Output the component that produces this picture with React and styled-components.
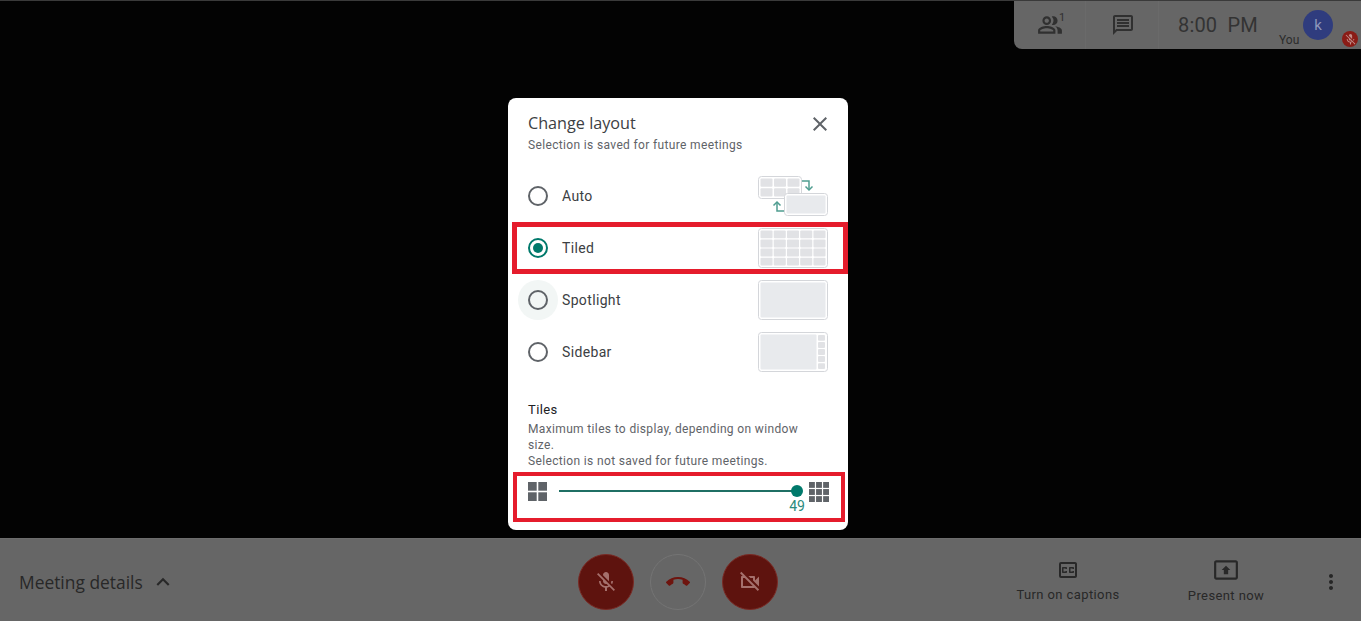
import React from 'react';
import styled, { createGlobalStyle } from 'styled-components';
import {
	MdClose,
	MdOutlinePeopleAlt,
	MdOutlineMessage,
	MdMicOff,
	MdCallEnd,
	MdOutlineVideocamOff,
	MdOutlineClosedCaption,
	MdOutlinePresentToAll,
	MdMoreVert,
	MdKeyboardArrowUp,
} from 'react-icons/md';

const TEAL = '#00796b';

function cells(cols, rows, x, y, w, h, gap) {
	const out = [];
	const cw = (w - gap * (cols - 1)) / cols;
	const ch = (h - gap * (rows - 1)) / rows;
	for (let r = 0; r < rows; r++) {
		for (let c = 0; c < cols; c++) {
			out.push(<rect key={`${r}-${c}`} x={x + c * (cw + gap)} y={y + r * (ch + gap)} width={cw} height={ch} rx="1" fill="#e1e2e5" />);
		}
	}
	return out;
}

function Frame() {
	return <rect x="0.5" y="0.5" width="69" height="39" rx="3" fill="#fff" stroke="#d4d6da" />;
}

function AutoThumb() {
	return (
		<svg width="70" height="40" viewBox="0 0 70 40">
			<rect x="0.5" y="0.5" width="43" height="22" rx="3" fill="#fff" stroke="#d4d6da" />
			{cells(3, 2, 2.5, 2.5, 39, 18, 1.5)}
			<path d="M44 5h7v9" fill="none" stroke="#4f9d90" strokeWidth="1.5" />
			<path d="M47.5 10.5L51 14l3.5-3.5" fill="none" stroke="#4f9d90" strokeWidth="1.5" />
			<path d="M27 35h-8v-9" fill="none" stroke="#4f9d90" strokeWidth="1.5" />
			<path d="M15.5 29.5L19 26l3.5 3.5" fill="none" stroke="#4f9d90" strokeWidth="1.5" />
			<rect x="26.5" y="17.5" width="43" height="22" rx="3" fill="#fff" stroke="#d4d6da" />
			<rect x="28.5" y="19.5" width="39" height="18" rx="1" fill="#e8eaed" />
		</svg>
	);
}

function TiledThumb() {
	return (
		<svg width="70" height="40" viewBox="0 0 70 40">
			<Frame />
			{cells(5, 4, 2.5, 2.5, 65, 35, 1.2)}
		</svg>
	);
}

function SpotlightThumb() {
	return (
		<svg width="70" height="40" viewBox="0 0 70 40">
			<Frame />
			<rect x="2.5" y="2.5" width="65" height="35" rx="1" fill="#e8eaed" />
		</svg>
	);
}

function SidebarThumb() {
	return (
		<svg width="70" height="40" viewBox="0 0 70 40">
			<Frame />
			<rect x="2.5" y="2.5" width="56" height="35" rx="1" fill="#e8eaed" />
			{cells(1, 5, 60, 3, 7, 34, 1.2)}
		</svg>
	);
}

function GridIcon({ n, size }) {
	const gap = n === 2 ? 1.6 : 1.2;
	const cw = (size - gap * (n - 1)) / n;
	const out = [];
	for (let r = 0; r < n; r++) {
		for (let c = 0; c < n; c++) {
			out.push(<rect key={`${r}-${c}`} x={c * (cw + gap)} y={r * (cw + gap)} width={cw} height={cw} fill="#5f6368" />);
		}
	}
	return (
		<svg width={size} height={size} viewBox={`0 0 ${size} ${size}`}>
			{out}
		</svg>
	);
}

const layouts = [
	{ label: 'Auto', thumb: <AutoThumb /> },
	{ label: 'Tiled', thumb: <TiledThumb />, checked: true, marked: true },
	{ label: 'Spotlight', thumb: <SpotlightThumb />, hovered: true },
	{ label: 'Sidebar', thumb: <SidebarThumb /> },
];

export default function App() {
	return (
		<Page>
			<GlobalStyle />
			<Stage>
				<TopPanel>
					<PeopleButton>
						<MdOutlinePeopleAlt size={26} />
						<PeopleCount>1</PeopleCount>
					</PeopleButton>
					<ChatButton>
						<MdOutlineMessage size={24} />
					</ChatButton>
					<Clock>8:00&nbsp; PM</Clock>
					<Self>
						<You>You</You>
						<Avatar>k</Avatar>
						<MutedBadge>
							<MdMicOff size={13} />
						</MutedBadge>
					</Self>
				</TopPanel>
			</Stage>
			<BottomBar>
				<Details>
					Meeting details
					<MdKeyboardArrowUp size={26} />
				</Details>
				<CallControls>
					<RoundButton $muted>
						<MdMicOff size={24} />
					</RoundButton>
					<RoundButton>
						<MdCallEnd size={24} />
					</RoundButton>
					<RoundButton $muted>
						<MdOutlineVideocamOff size={24} />
					</RoundButton>
				</CallControls>
				<BarActions>
					<BarAction>
						<MdOutlineClosedCaption size={24} />
						<span>Turn on captions</span>
					</BarAction>
					<BarAction>
						<MdOutlinePresentToAll size={26} />
						<span>Present now</span>
					</BarAction>
					<Kebab>
						<MdMoreVert size={24} />
					</Kebab>
				</BarActions>
			</BottomBar>

			<Dialog>
				<DialogHeader>
					<div>
						<DialogTitle>Change layout</DialogTitle>
						<DialogSub>Selection is saved for future meetings</DialogSub>
					</div>
					<CloseButton>
						<MdClose size={24} />
					</CloseButton>
				</DialogHeader>
				<LayoutList>
					{layouts.map((l) => (
						<LayoutRow key={l.label} $marked={l.marked}>
							<Radio $checked={l.checked} $hovered={l.hovered} />
							<RowLabel>{l.label}</RowLabel>
							{l.thumb}
						</LayoutRow>
					))}
				</LayoutList>
				<TilesInfo>
					<TilesTitle>Tiles</TilesTitle>
					<TilesText>
						Maximum tiles to display, depending on window size.
						<br />
						Selection is not saved for future meetings.
					</TilesText>
				</TilesInfo>
				<SliderBox>
					<GridIcon n={2} size={19} />
					<SliderColumn>
						<Track>
							<Thumb />
						</Track>
						<SliderValue>49</SliderValue>
					</SliderColumn>
					<GridIcon n={3} size={20} />
				</SliderBox>
			</Dialog>
		</Page>
	);
}

const GlobalStyle = createGlobalStyle`
	html, body {
		margin: 0;
		padding: 0;
		background: #000;
	}
	* {
		box-sizing: border-box;
	}
`;

const Page = styled.div`
	position: relative;
	width: 1361px;
	height: 621px;
	overflow: hidden;
	display: flex;
	flex-direction: column;
	font-family: Roboto, "Liberation Sans", sans-serif;
	background: #030303;
`;

const Stage = styled.div`
	height: 538px;
	border-top: 1px solid #3a3a3a;
	display: flex;
	justify-content: flex-end;
	align-items: flex-start;
`;

const TopPanel = styled.div`
	width: 347px;
	height: 48px;
	background: #666;
	border-bottom-left-radius: 8px;
	display: flex;
	align-items: center;
	color: #2c2c2c;
`;

const PeopleButton = styled.div`
	position: relative;
	width: 72px;
	height: 48px;
	padding-left: 23px;
	display: flex;
	align-items: center;
	border-right: 1px solid #6a6a6a;
	color: #303030;
`;

const PeopleCount = styled.span`
	position: absolute;
	left: 45px;
	top: 10px;
	font-size: 11px;
`;

const ChatButton = styled.div`
	width: 73px;
	height: 48px;
	padding-left: 2px;
	display: flex;
	align-items: center;
	justify-content: center;
	border-right: 1px solid #6a6a6a;
	color: #303030;
`;

const Clock = styled.div`
	margin-left: 19px;
	width: 101px;
	font-size: 20px;
	letter-spacing: 0.15px;
	color: #333;
`;

const Self = styled.div`
	position: relative;
	width: 80px;
	height: 48px;
`;

const You = styled.span`
	position: absolute;
	left: 0;
	top: 32px;
	font-size: 12px;
	color: #2c2c2c;
`;

const Avatar = styled.div`
	position: absolute;
	left: 24px;
	top: 9px;
	width: 30px;
	height: 30px;
	border-radius: 50%;
	background: #2f3c7e;
	color: #8e97bb;
	font-size: 15px;
	display: flex;
	align-items: center;
	justify-content: center;
`;

const MutedBadge = styled.div`
	position: absolute;
	left: 63px;
	top: 30px;
	width: 16px;
	height: 16px;
	border-radius: 50%;
	background: #8a1c16;
	color: #c08c88;
	display: flex;
	align-items: center;
	justify-content: center;
`;

const BottomBar = styled.div`
	flex: 1;
	padding-top: 4px;
	background: #666;
	border-top: 1px solid #6c6c6c;
	display: grid;
	grid-template-columns: 578px auto 1fr;
	align-items: center;
`;

const Details = styled.div`
	padding-left: 19px;
	display: flex;
	align-items: center;
	gap: 7px;
	font-family: "Open Sans", Roboto, sans-serif;
	font-size: 17.4px;
	color: #282828;
`;

const CallControls = styled.div`
	display: flex;
	gap: 16px;
`;

const RoundButton = styled.div`
	width: 56px;
	height: 56px;
	border-radius: 50%;
	display: flex;
	align-items: center;
	justify-content: center;
	border: 1px solid ${(p) => (p.$muted ? '#7a2a24' : '#747474')};
	background: ${(p) => (p.$muted ? '#5e130e' : 'transparent')};
	color: ${(p) => (p.$muted ? '#a5706c' : '#6e140e')};
`;

const BarActions = styled.div`
	display: flex;
	align-items: center;
	justify-content: flex-end;
	padding-right: 18px;
`;

const BarAction = styled.div`
	width: 158px;
	margin-top: -4px;
	display: flex;
	flex-direction: column;
	align-items: center;
	gap: 5px;
	font-size: 13px;
	letter-spacing: 0.4px;
	color: #282828;
`;

const Kebab = styled.div`
	width: 24px;
	margin-left: 14px;
	display: flex;
	color: #262626;
`;

const Dialog = styled.div`
	position: absolute;
	z-index: 1;
	left: 508px;
	top: 98px;
	width: 340px;
	height: 432px;
	background: #fff;
	border-radius: 8px;
	overflow: hidden;
`;

const DialogHeader = styled.div`
	height: 72px;
	padding: 15px 16px 0 20px;
	display: flex;
	justify-content: space-between;
	align-items: flex-start;
`;

const DialogTitle = styled.div`
	font-family: "Open Sans", Roboto, sans-serif;
	font-size: 16.2px;
	line-height: 20px;
	font-weight: 500;
	color: #3c4043;
`;

const DialogSub = styled.div`
	margin-top: 4px;
	font-size: 12px;
	line-height: 16px;
	letter-spacing: 0.35px;
	color: #5f6368;
`;

const CloseButton = styled.div`
	margin-top: -1px;
	display: flex;
	color: #5f6368;
`;

const LayoutList = styled.div`
	margin-left: 4px;
`;

const LayoutRow = styled.div`
	height: 52px;
	padding: 0 15px 0 11px;
	display: flex;
	align-items: center;
	border: 5px solid ${(p) => (p.$marked ? '#e51c2c' : 'transparent')};
`;

const Radio = styled.div`
	position: relative;
	width: 20px;
	height: 20px;
	border-radius: 50%;
	border: 2px solid ${(p) => (p.$checked ? TEAL : '#5f6368')};
	display: flex;
	align-items: center;
	justify-content: center;
	&::before {
		content: '';
		position: absolute;
		inset: -12px;
		border-radius: 50%;
		background: ${(p) => (p.$hovered ? '#f2f6f5' : 'transparent')};
		z-index: -1;
	}
	&::after {
		content: '';
		width: 10px;
		height: 10px;
		border-radius: 50%;
		background: ${(p) => (p.$checked ? TEAL : 'transparent')};
	}
`;

const RowLabel = styled.span`
	flex: 1;
	margin-left: 14px;
	font-size: 14px;
	letter-spacing: 0.35px;
	color: #3c4043;
`;

const TilesInfo = styled.div`
	margin-top: 23px;
	padding: 0 20px;
`;

const TilesTitle = styled.div`
	font-size: 13px;
	line-height: 18px;
	letter-spacing: 0.4px;
	color: #202124;
`;

const TilesText = styled.div`
	margin-top: 2px;
	max-width: 290px;
	font-size: 12px;
	line-height: 16px;
	letter-spacing: 0.35px;
	color: #5f6368;
`;

const SliderBox = styled.div`
	margin: 3px 3px 0 5px;
	height: 50px;
	padding: 6px 12px 0 11px;
	border: 4px solid #e51c2c;
	display: flex;
	align-items: flex-start;
`;

const SliderColumn = styled.div`
	flex: 1;
	margin: 0 12px 0 12px;
	display: flex;
	flex-direction: column;
	align-items: flex-end;
`;

const Track = styled.div`
	position: relative;
	margin-top: 8px;
	width: 100%;
	height: 2px;
	background: #1f6f64;
`;

const Thumb = styled.div`
	position: absolute;
	right: -6px;
	top: -5px;
	width: 12px;
	height: 12px;
	border-radius: 50%;
	background: ${TEAL};
`;

const SliderValue = styled.div`
	margin: 0 -8px 0 0;
	padding-top: 6px;
	font-size: 14px;
	line-height: 16px;
	color: #2a8a7d;
`;
